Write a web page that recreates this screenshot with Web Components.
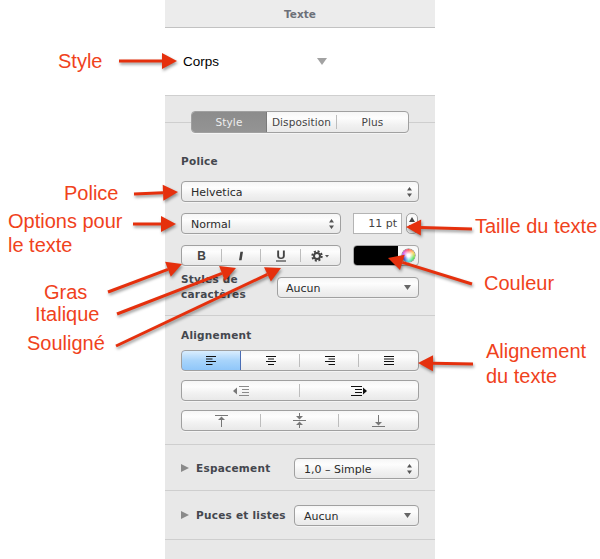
<!DOCTYPE html>
<html lang="fr">
<head>
<meta charset="utf-8">
<title>Texte</title>
<style>
  html, body { margin: 0; padding: 0; background: #fff; }
  body { width: 600px; height: 559px; overflow: hidden; }
</style>
</head>
<body>
<note-page>
  <inspector-panel>
    <panel-header>Texte</panel-header>

    <style-picker>Corps</style-picker>

    <panel-section pad="15px 16px 17px">
      <tab-row>
        <seg-group columns="74px 71px 1fr" height="22">
          <seg-item tone="gray">Style</seg-item>
          <seg-item plain>Disposition</seg-item>
          <seg-item>Plus</seg-item>
        </seg-group>
      </tab-row>
      <section-label top="21">Police</section-label>
      <pop-select top="13" kind="updown" pad="9">Helvetica</pop-select>
      <form-row top="11">
        <pop-select width="160" kind="updown" pad="9">Normal</pop-select>
        <size-field>11 pt</size-field>
      </form-row>
      <form-row top="11">
        <seg-group columns="repeat(4, 1fr)" width="160">
          <seg-item><b class="g">B</b></seg-item>
          <seg-item><svg width="8" height="10" viewBox="0 0 8 10"><path d="M3.4 .8h2.6L4.6 9.2H2z" fill="#444"/></svg></seg-item>
          <seg-item><svg width="10" height="12" viewBox="0 0 10 12"><path d="M1.2 .5V6c0 2 1.4 3 3.8 3s3.8-1 3.8-3V.5H6.9v5.300c0 1.300-.7 1.800-1.900 1.800s-1.900-.5-1.900-1.800V.5z" fill="#444"/><rect x="0" y="10.400" width="10" height="1.200" fill="#444"/></svg></seg-item>
          <seg-item>
            <svg width="18" height="12" viewBox="0 0 18 12"><circle cx="6" cy="6" r="3" fill="none" stroke="#444" stroke-width="2"/><circle cx="6" cy="6" r="4.700" fill="none" stroke="#444" stroke-width="2" stroke-dasharray="2 1.690"/><path d="M14 5h4l-2 2.500z" fill="#555"/></svg>
          </seg-item>
        </seg-group>
        <color-well></color-well>
      </form-row>
      <form-row top="11" between>
        <multi-label>Styles de<br>caractères</multi-label>
        <pop-select width="142" kind="down" pad="8">Aucun</pop-select>
      </form-row>
    </panel-section>

    <panel-section pad="12px 16px 13px">
      <section-label>Alignement</section-label>
      <seg-group top="8" columns="repeat(4, 1fr)">
        <seg-item tone="blue"><svg width="10" height="9" viewBox="0 0 10 9"><path d="M0 .5h10M0 3h6.500M0 5.500h10M0 8.500h6.500" stroke="#111" fill="none"/></svg></seg-item>
        <seg-item plain><svg width="10" height="9" viewBox="0 0 10 9"><path d="M0 .5h10M2 3h6M0 5.500h10M2 8.500h6" stroke="#111" fill="none"/></svg></seg-item>
        <seg-item><svg width="10" height="9" viewBox="0 0 10 9"><path d="M0 .5h10M3.500 3h6.500M0 5.500h10M3.500 8.500h6.500" stroke="#111" fill="none"/></svg></seg-item>
        <seg-item><svg width="10" height="9" viewBox="0 0 10 9"><path d="M0 .5h10M0 3h10M0 5.500h10M0 8.500h10" stroke="#111" fill="none"/></svg></seg-item>
      </seg-group>
      <seg-group top="9" columns="repeat(2, 1fr)">
        <seg-item><svg width="16" height="10" viewBox="0 0 16 10"><path d="M6 .5h10M9 3.500h7M9 6.500h7M6 9.500h10" stroke="#8a8a8a" fill="none"/><path d="M0 5l4-3.500v7z" fill="#777"/></svg></seg-item>
        <seg-item><svg width="16" height="10" viewBox="0 0 16 10"><path d="M0 .5h11M4 3.500h7M4 6.500h7M0 9.500h11" stroke="#111" fill="none"/><path d="M16 5l-4-3.500v7z" fill="#111"/></svg></seg-item>
      </seg-group>
      <seg-group top="9" columns="repeat(3, 1fr)">
        <seg-item><svg width="13" height="12" viewBox="0 0 13 12"><path d="M0 .5h13M6.500 4v8" stroke="#777" fill="none"/><path d="M6.500 1.500l-3.500 3.500h7z" fill="#777"/></svg></seg-item>
        <seg-item><svg width="13" height="15" viewBox="0 0 13 15"><path d="M0 7.500h13M6.500 0v3M6.500 12v3" stroke="#777" fill="none"/><path d="M6.500 6.500l-3.500-3.500h7zM6.500 8.500l-3.500 3.500h7z" fill="#777"/></svg></seg-item>
        <seg-item><svg width="13" height="12" viewBox="0 0 13 12"><path d="M0 11.500h13M6.500 0v8" stroke="#777" fill="none"/><path d="M6.500 10.500l-3.500-3.500h7z" fill="#777"/></svg></seg-item>
      </seg-group>
    </panel-section>

    <panel-section pad="13px 16px 11px">
      <disclosure-row label="Espacement">
        <pop-select width="125" kind="updown" pad="9">1,0 – Simple</pop-select>
      </disclosure-row>
    </panel-section>

    <panel-section pad="14px 16px 13px">
      <disclosure-row label="Puces et listes">
        <pop-select width="125" kind="down" pad="9">Aucun</pop-select>
      </disclosure-row>
    </panel-section>
  </inspector-panel>

  <callout-layer>
    <call-out x="58" y="61">Style</call-out>
    <call-out x="64" y="193">Police</call-out>
    <call-out x="8" y="221">Options pour</call-out>
    <call-out x="8" y="245">le texte</call-out>
    <call-out x="44" y="292">Gras</call-out>
    <call-out x="35" y="314">Italique</call-out>
    <call-out x="27" y="343">Souligné</call-out>
    <call-out x="475" y="226">Taille du texte</call-out>
    <call-out x="484" y="283">Couleur</call-out>
    <call-out x="486" y="351">Alignement</call-out>
    <call-out x="486" y="376">du texte</call-out>
  </callout-layer>
</note-page>

<script>
// shadow helper, every element here is just style + markup
class Base extends HTMLElement {
  constructor() {
    super();
    this.attachShadow({ mode: 'open' });
  }
  render(html) {
    this.shadowRoot.innerHTML = html;
  }
}

const UI_FONT = '"DejaVu Sans", sans-serif';
const BTN_BG = 'linear-gradient(#f6f6f6, #fdfdfd 30%, #f1f1f1 65%, #e9e9e9)';

class NotePage extends Base {
  connectedCallback() {
    this.render(`
      <style>
        :host { display: grid; grid-template-columns: 165px 270px 165px; width: 600px; height: 559px; position: relative; overflow: hidden; }
        ::slotted(inspector-panel) { grid-column: 2; }
      </style>
      <slot></slot>`);
  }
}

class InspectorPanel extends Base {
  connectedCallback() {
    this.render(`
      <style>
        :host { display: block; background: #e8e8e8; height: 559px; font: 11px ${UI_FONT}; color: #222; }
      </style>
      <slot></slot>`);
  }
}

class PanelHeader extends Base {
  connectedCallback() {
    this.render(`
      <style>
        :host { display: flex; align-items: center; justify-content: center; height: 27px; background: #ececec; border-bottom: 1px solid #c2c2c2; font-weight: bold; font-size: 10.500px; color: #6c7079; }
      </style>
      <slot></slot>`);
  }
}

class StylePicker extends Base {
  connectedCallback() {
    this.render(`
      <style>
        :host { display: flex; align-items: center; height: 67px; background: #fff; border-bottom: 1px solid #cfcfcf; padding-left: 18px; padding-right: 108px; justify-content: space-between; font: 13.500px "Liberation Sans", Arial, sans-serif; color: #000; }
        i { width: 0; height: 0; border: 5.500px solid transparent; border-top: 7px solid #a2a2a2; border-bottom: 0; }
      </style>
      <span><slot></slot></span><i></i>`);
  }
}

class PanelSection extends Base {
  connectedCallback() {
    this.render(`
      <style>
        :host { display: flex; flex-direction: column; padding: ${this.getAttribute('pad')}; border-bottom: 1px solid #cecece; }
      </style>
      <slot></slot>`);
  }
}

class TabRow extends Base {
  connectedCallback() {
    this.render(`
      <style>
        :host { display: block; margin: 0 -16px; padding: 0 26px; background: linear-gradient(#cecece, #cecece) center / 100% 1px no-repeat; }
      </style>
      <slot></slot>`);
  }
}

class SectionLabel extends Base {
  connectedCallback() {
    this.render(`
      <style>
        :host { display: block; height: 14px; line-height: 14px; margin-top: ${this.getAttribute('top') || 0}px; font-weight: bold; font-size: 10.500px; letter-spacing: .25px; color: #44474e; }
      </style>
      <slot></slot>`);
  }
}

class MultiLabel extends Base {
  connectedCallback() {
    this.render(`
      <style>
        :host { display: block; height: 21px; line-height: 15px; font-weight: bold; font-size: 10.500px; letter-spacing: .25px; color: #44474e; margin-top: -5px; }
      </style>
      <slot></slot>`);
  }
}

class FormRow extends Base {
  connectedCallback() {
    const between = this.hasAttribute('between') ? 'space-between' : 'flex-start';
    this.render(`
      <style>
        :host { display: flex; align-items: flex-start; justify-content: ${between}; gap: 12px; height: 21px; margin-top: ${this.getAttribute('top')}px; }
      </style>
      <slot></slot>`);
  }
}

class PopSelect extends Base {
  connectedCallback() {
    const w = this.getAttribute('width');
    const top = this.getAttribute('top') || 0;
    const arrow = this.getAttribute('kind') === 'updown'
      ? '<svg width="5" height="10" viewBox="0 0 5 10"><path d="M2.500 0l2.500 3.500H0zM2.500 10l2.500-3.500H0z" fill="#555"/></svg>'
      : '<svg width="7" height="5" viewBox="0 0 7 5"><path d="M0 0h7L3.500 5z" fill="#666"/></svg>';
    this.render(`
      <style>
        :host { display: flex; align-items: center; justify-content: space-between; box-sizing: border-box; height: 21px; flex: none;
          ${w ? `width: ${w}px;` : ''} margin-top: ${top}px; padding: 0 ${this.getAttribute('kind') === 'updown' ? 6 : 7}px 0 ${this.getAttribute('pad')}px;
          background: ${BTN_BG}; border: 1px solid #a0a0a0; border-radius: 4px; box-shadow: 0 1px 0 rgba(255,255,255,.5);
          font: 11px ${UI_FONT}; color: #2a2a2a; }
        span { position: relative; top: 1px; }
      </style>
      <span><slot></slot></span>${arrow}`);
  }
}

class SegGroup extends Base {
  connectedCallback() {
    const w = this.getAttribute('width');
    this.render(`
      <style>
        :host { display: grid; grid-template-columns: ${this.getAttribute('columns')}; box-sizing: border-box; height: ${this.getAttribute('height') || 21}px; flex: none;
          ${w ? `width: ${w}px;` : ''} margin-top: ${this.getAttribute('top') || 0}px;
          background: ${BTN_BG}; border: 1px solid #a0a0a0; border-radius: 4px; overflow: hidden; box-shadow: 0 1px 0 rgba(255,255,255,.5); }
      </style>
      <slot></slot>`);
  }
}

class SegItem extends Base {
  connectedCallback() {
    const tone = this.getAttribute('tone');
    let bg = '';
    if (tone === 'gray') bg = 'background: linear-gradient(#8c8c8c, #949494); color: #eee; box-shadow: 1px 0 0 #7a7a7a;';
    if (tone === 'blue') bg = 'background: linear-gradient(#dff0fe, #a8d4fb 50%, #8dc5f9); box-shadow: inset 0 0 0 1px #4a6db4; margin: -1px 0 -1px -1px; border-radius: 4px 0 0 4px;';
    this.render(`
      <style>
        :host { display: flex; align-items: center; justify-content: center; position: relative; font: 10.500px ${UI_FONT}; letter-spacing: .1px; color: #444; ${bg} }
        :host(:not(:first-child):not([plain]))::before { content: ""; position: absolute; left: -1px; top: 3px; bottom: 3px; width: 1px; background: #bdbdbd; }
        ::slotted(.g) { font: bold 12px "Liberation Sans", Arial, sans-serif; color: #444; }
      </style>
      <slot></slot>`);
  }
}

class SizeField extends Base {
  connectedCallback() {
    this.render(`
      <style>
        :host { display: flex; gap: 4px; flex: none; }
        .box { box-sizing: border-box; width: 49px; height: 21px; background: #fff; border: 1px solid #b4b4b4; text-align: right; padding-right: 4px; font: 11px/20px ${UI_FONT}; color: #444; }
        .step { box-sizing: border-box; width: 12px; height: 21px; border: 1px solid #a0a0a0; border-radius: 5px; background: ${BTN_BG}; display: flex; flex-direction: column; align-items: center; justify-content: space-between; padding: 3px 0; }
      </style>
      <div class="box"><slot></slot></div>
      <div class="step">
        <svg width="6" height="5" viewBox="0 0 6 5"><path d="M3 0l3 5H0z" fill="#444"/></svg>
        <svg width="6" height="5" viewBox="0 0 6 5"><path d="M3 5l3-5H0z" fill="#444"/></svg>
      </div>`);
  }
}

class ColorWell extends Base {
  connectedCallback() {
    this.render(`
      <style>
        :host { display: flex; align-items: center; box-sizing: border-box; width: 66px; height: 21px; flex: none; border: 1px solid #a8a8a8; border-radius: 4px; background: ${BTN_BG}; overflow: hidden; }
        .swatch { width: 45px; height: 21px; margin: -1px 0 -1px -1px; background: #000; border-radius: 3px 0 0 3px; }
        .wheel { width: 13px; height: 13px; margin-left: 4px; border-radius: 50%; background: radial-gradient(circle, #fff 15%, rgba(255,255,255,0) 75%), conic-gradient(#f33, #fc3, #3d3, #3dd, #33f, #d3d, #f33); box-shadow: 0 0 0 .5px #777; }
      </style>
      <div class="swatch"></div><div class="wheel"></div>`);
  }
}

class DisclosureRow extends Base {
  connectedCallback() {
    this.render(`
      <style>
        :host { display: flex; align-items: center; justify-content: space-between; height: 21px; }
        .l { display: flex; align-items: center; gap: 7px; margin-top: -2px; font-weight: bold; font-size: 10.500px; letter-spacing: .25px; color: #44474e; }
        i { width: 0; height: 0; border: 4px solid transparent; border-left: 8px solid #8a8a8a; border-right: 0; }
      </style>
      <div class="l"><i></i><span>${this.getAttribute('label')}</span></div>
      <slot></slot>`);
  }
}

// arrows from the callout label to the control, coords in page pixels
const ARROWS = [
  [119, 61, 177, 61],
  [134, 194, 178, 192],
  [133, 224, 176, 224],
  [108, 292, 182, 264],
  [117, 314, 236, 268],
  [116, 346, 281, 268],
  [472, 229, 406, 227],
  [472, 284, 388, 258],
  [473, 364, 418, 363]
];

function arrowShape([x1, y1, x2, y2]) {
  const len = Math.hypot(x2 - x1, y2 - y1);
  const ux = (x2 - x1) / len, uy = (y2 - y1) / len;
  const bx = x2 - ux * 15, by = y2 - uy * 15;
  const wing = 8;
  const head = [
    [x2, y2],
    [bx - uy * wing, by + ux * wing],
    [bx + uy * wing, by - ux * wing]
  ].map(p => p.map(n => n.toFixed(1)).join(',')).join(' ');
  return `<line x1="${x1}" y1="${y1}" x2="${bx.toFixed(1)}" y2="${by.toFixed(1)}" stroke="#e5300d" stroke-width="3"/><polygon points="${head}" fill="#e5300d"/>`;
}

class CalloutLayer extends Base {
  connectedCallback() {
    this.render(`
      <style>
        :host { position: absolute; inset: 0; display: block; pointer-events: none; }
        svg { position: absolute; left: 0; top: 0; filter: drop-shadow(1px 2px 1.500px rgba(0,0,0,.4)); }
      </style>
      <svg width="600" height="559" viewBox="0 0 600 559">${ARROWS.map(arrowShape).join('')}</svg>
      <slot></slot>`);
  }
}

class CallOut extends Base {
  connectedCallback() {
    this.render(`
      <style>
        :host { position: absolute; left: ${this.getAttribute('x')}px; top: ${this.getAttribute('y') - 12}px; height: 24px; white-space: nowrap; font: 20px/24px "Liberation Sans", Arial, sans-serif; color: #f0421c; }
      </style>
      <slot></slot>`);
  }
}

customElements.define('note-page', NotePage);
customElements.define('inspector-panel', InspectorPanel);
customElements.define('panel-header', PanelHeader);
customElements.define('style-picker', StylePicker);
customElements.define('panel-section', PanelSection);
customElements.define('tab-row', TabRow);
customElements.define('section-label', SectionLabel);
customElements.define('multi-label', MultiLabel);
customElements.define('form-row', FormRow);
customElements.define('pop-select', PopSelect);
customElements.define('seg-group', SegGroup);
customElements.define('seg-item', SegItem);
customElements.define('size-field', SizeField);
customElements.define('color-well', ColorWell);
customElements.define('disclosure-row', DisclosureRow);
customElements.define('callout-layer', CalloutLayer);
customElements.define('call-out', CallOut);
</script>
</body>
</html>
